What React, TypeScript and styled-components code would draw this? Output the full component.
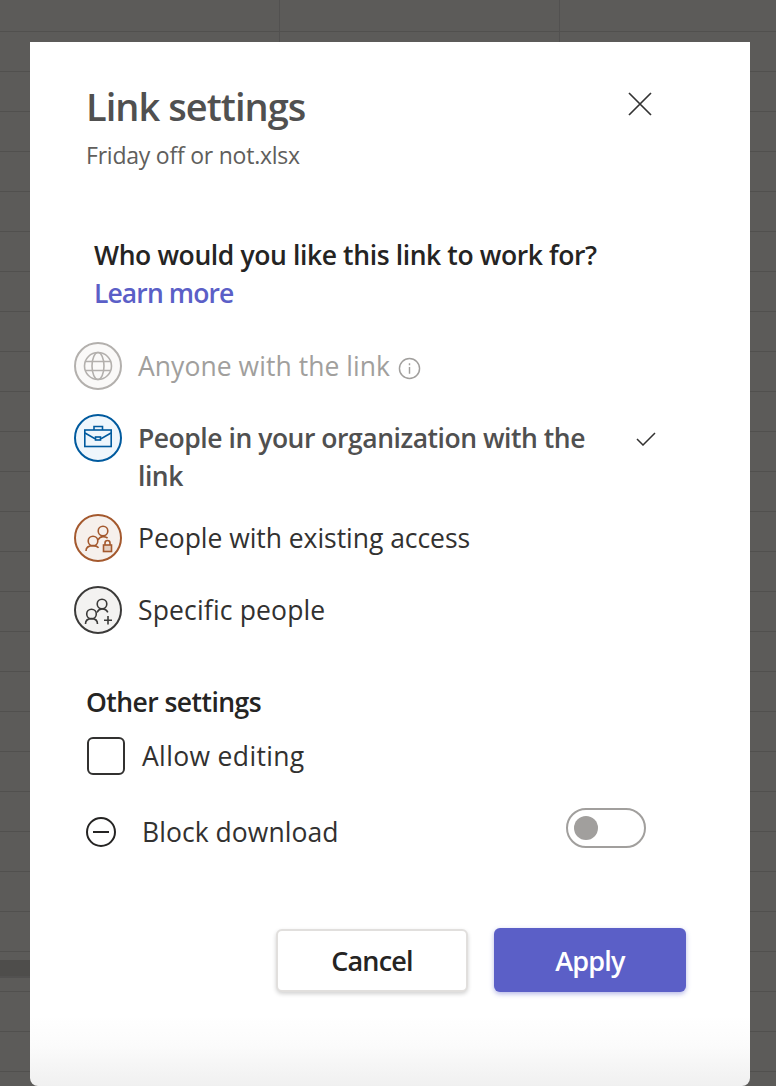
import React from "react";
import styled, { createGlobalStyle } from "styled-components";

const FONT = `"Open Sans", "Noto Sans", "Liberation Sans", sans-serif`;

const Global = createGlobalStyle`
  html, body { margin: 0; padding: 0; height: 100%; }
  body { overflow: hidden; background: #5c5b59; font-family: ${FONT}; }
  * { box-sizing: border-box; }
`;

const Page = styled.div`
  width: 776px;
  height: 1086px;
  padding: 42px 26px 0 30px;
  background-color: #5c5b59;
  background-image:
    linear-gradient(#4e4d4b, #4e4d4b),
    linear-gradient(#525150, #525150),
    repeating-linear-gradient(to bottom, transparent 0 31px, #51504e 31px 32px, transparent 32px 40px),
    linear-gradient(to right, transparent 279px, #525150 279px 280px, transparent 280px 559px, #525150 559px 560px, transparent 560px);
  background-size: 30px 16px, 30px 2px, 100% 100%, 100% 42px;
  background-position: 0 960px, 0 976px, 0 0, 0 0;
  background-repeat: no-repeat;
`;

const Dialog = styled.section`
  width: 720px;
  height: 1044px;
  padding: 39px 64px 0 56px;
  border-radius: 0 0 8px 8px;
  background: linear-gradient(to top, #f0f0f0 0, #fbfbfb 40px, #fff 70px);
  display: flex;
  flex-direction: column;
`;

const Header = styled.header`
  display: flex;
  justify-content: space-between;
  align-items: flex-start;
  padding-right: 34px;
`;

const Title = styled.h1`
  margin: 0;
  font-size: 38px;
  line-height: 50px;
  font-weight: 600;
  letter-spacing: -0.95px;
  color: #505050;
`;

const Close = styled.button`
  width: 24px;
  height: 24px;
  margin-top: 11px;
  padding: 0;
  border: 0;
  background: none;
  display: block;
  color: #333;
`;

const Subtitle = styled.p`
  margin: 9px 0 0;
  font-size: 23px;
  line-height: 30px;
  letter-spacing: -0.23px;
  color: #605e5c;
`;

const Question = styled.h2`
  margin: 66px 0 0 8px;
  font-size: 26.5px;
  line-height: 38px;
  font-weight: 600;
  letter-spacing: -0.39px;
  color: #252423;
`;

const Learn = styled.a`
  display: block;
  margin-left: 8px;
  font-size: 26.5px;
  line-height: 38px;
  font-weight: 600;
  letter-spacing: -0.9px;
  color: #5b5fc7;
`;

const Options = styled.div`
  display: flex;
  flex-direction: column;
  gap: 24px;
  margin: 30px 0 0 -12px;
`;

const Row = styled.div`
  display: flex;
  align-items: flex-start;
  gap: 16px;
`;

const IconCircle = styled.svg`
  flex: none;
  width: 48px;
  height: 48px;
  display: block;
`;

const OptionText = styled.div<{ $tone: "muted" | "strong" | "plain"; $tracking?: number }>`
  width: 474px;
  margin: 5px 0 -5px;
  font-size: 26.5px;
  line-height: 38px;
  letter-spacing: ${(p) => (p.$tone === "strong" ? -0.47 : p.$tracking ?? 0.05)}px;
  font-weight: ${(p) => (p.$tone === "strong" ? 600 : 400)};
  color: ${(p) => (p.$tone === "muted" ? "#a19f9d" : p.$tone === "strong" ? "#505050" : "#323130")};
`;

const InfoIcon = styled.svg`
  width: 23px;
  height: 23px;
  margin-left: 8px;
  vertical-align: -4px;
`;

const Check = styled.svg`
  flex: none;
  width: 20px;
  height: 14px;
  margin: 18px 0 0 8px;
`;

const Section = styled.h3`
  margin: 49px 0 0;
  font-size: 26.5px;
  line-height: 38px;
  font-weight: 600;
  letter-spacing: -0.55px;
  color: #252423;
`;

const CheckRow = styled.label`
  display: flex;
  align-items: center;
  margin-top: 15px;
  height: 40px;
`;

const Box = styled.span`
  width: 38px;
  height: 38px;
  border: 2px solid #323130;
  border-radius: 6px;
  margin-left: 1px;
`;

const AllowText = styled.span`
  margin-left: 17px;
  font-size: 26.5px;
  line-height: 38px;
  letter-spacing: 0.35px;
  color: #323130;
`;

const BlockRow = styled.div`
  display: flex;
  align-items: center;
  margin-top: 31px;
  height: 40px;
  padding-right: 40px;
`;

const BlockIcon = styled.svg`
  flex: none;
  width: 30px;
  height: 30px;
  margin: 10px 26px 0 0;
`;

const BlockText = styled.span`
  flex: 1;
  margin-top: 10px;
  font-size: 26.5px;
  line-height: 38px;
  letter-spacing: 0.05px;
  color: #323130;
`;

const Toggle = styled.div`
  width: 80px;
  height: 40px;
  border: 2px solid #a19f9d;
  border-radius: 20px;
  padding: 6px;
  margin-top: 2px;
`;

const Knob = styled.div`
  width: 24px;
  height: 24px;
  border-radius: 50%;
  background: #a19f9d;
`;

const Actions = styled.div`
  display: flex;
  justify-content: flex-end;
  align-items: center;
  gap: 26px;
  margin-top: 81px;
`;

const CancelButton = styled.button`
  width: 192px;
  height: 63px;
  border: 2px solid #e1dfdd;
  border-radius: 6px;
  background: #fff;
  box-shadow: 0 2px 4px rgba(0, 0, 0, 0.18);
  font-family: ${FONT};
  font-size: 27px;
  font-weight: 600;
  letter-spacing: -0.8px;
  color: #252423;
`;

const ApplyButton = styled.button`
  width: 192px;
  height: 64px;
  border: 0;
  border-radius: 6px;
  background: #5b5fc7;
  box-shadow: 0 2px 5px rgba(91, 95, 199, 0.45);
  font-family: ${FONT};
  font-size: 27px;
  font-weight: 600;
  letter-spacing: -0.8px;
  color: #fff;
`;

const Globe = () => (
  <IconCircle viewBox="0 0 48 48" fill="none">
    <circle cx="24" cy="24" r="23" fill="#faf9f8" stroke="#b3b0ad" strokeWidth="2" />
    <g stroke="#b3b0ad" strokeWidth="1.6">
      <circle cx="24" cy="24" r="13.5" />
      <ellipse cx="24" cy="24" rx="6" ry="13.5" />
      <path d="M11 19.5h26M11 28.5h26" />
    </g>
  </IconCircle>
);

const Briefcase = () => (
  <IconCircle viewBox="0 0 48 48" fill="none">
    <circle cx="24" cy="24" r="23" fill="#eff6fc" stroke="#005a9e" strokeWidth="2" />
    <g stroke="#005a9e" strokeWidth="1.6">
      <rect x="10.8" y="16" width="26.4" height="16.5" />
      <path d="M20 16v-3.5h8.5V16M11 19l9.5 5.5h7L37 19" />
      <rect x="21.5" y="23" width="5" height="3" fill="#eff6fc" />
    </g>
  </IconCircle>
);

const PeopleLock = () => (
  <IconCircle viewBox="0 0 48 48" fill="none">
    <circle cx="24" cy="24" r="23" fill="#f6f0ec" stroke="#a4592e" strokeWidth="2" />
    <g stroke="#a4592e" strokeWidth="1.6">
      <circle cx="29" cy="17" r="4.8" />
      <circle cx="19" cy="27" r="4.8" />
      <path d="M12 37c0-3.6 3-5.4 7-5.4 2.4 0 4.4.8 5.6 2.2M24 26c1-2 3-3.4 5-3.4 1.8 0 3.2.4 4.6 1.4" />
      <rect x="29.5" y="31" width="8" height="6.5" fill="#a4592e" fillOpacity="0.22" />
      <path d="M31 31v-2a2.5 2.5 0 0 1 5 0v2" />
    </g>
  </IconCircle>
);

const PeopleAdd = () => (
  <IconCircle viewBox="0 0 48 48" fill="none">
    <circle cx="24" cy="24" r="23" fill="#f3f2f1" stroke="#3b3a39" strokeWidth="2" />
    <g stroke="#3b3a39" strokeWidth="1.6">
      <circle cx="28" cy="18" r="4.8" />
      <circle cx="17.5" cy="28" r="4.8" />
      <path d="M11.5 38c0-3.6 2.6-5.4 6-5.4 3.4 0 6 1.8 6 5.4M23 26.5c1-2 3-3.6 5-3.6 2.6 0 4.8 1.2 5.8 3.4M34 30v8.5M30 34.2h8" />
    </g>
  </IconCircle>
);

export default function App() {
  return (
    <Page>
      <Global />
      <Dialog>
        <Header>
          <Title>Link settings</Title>
          <Close aria-label="Close">
            <svg width="24" height="24" viewBox="0 0 24 24" fill="none" stroke="currentColor" strokeWidth="1.7">
              <path d="M1 1l22 22M23 1L1 23" />
            </svg>
          </Close>
        </Header>
        <Subtitle>Friday off or not.xlsx</Subtitle>
        <Question>Who would you like this link to work for?</Question>
        <Learn>Learn more</Learn>
        <Options>
          <Row>
            <Globe />
            <OptionText $tone="muted">
              Anyone with the link
              <InfoIcon viewBox="0 0 24 24" fill="none" stroke="#a19f9d" strokeWidth="1.5">
                <circle cx="12" cy="12" r="10.5" />
                <path d="M12 10.5v7M12 6.5v2" />
              </InfoIcon>
            </OptionText>
          </Row>
          <Row>
            <Briefcase />
            <OptionText $tone="strong">People in your organization with the link</OptionText>
            <Check viewBox="0 0 20 14" fill="none" stroke="#323130" strokeWidth="1.5">
              <path d="M1 7l6 6L19 1" />
            </Check>
          </Row>
          <Row>
            <PeopleLock />
            <OptionText $tone="plain" $tracking={-0.04}>People with existing access</OptionText>
          </Row>
          <Row>
            <PeopleAdd />
            <OptionText $tone="plain" $tracking={0.16}>Specific people</OptionText>
          </Row>
        </Options>
        <Section>Other settings</Section>
        <CheckRow>
          <Box />
          <AllowText>Allow editing</AllowText>
        </CheckRow>
        <BlockRow>
          <BlockIcon viewBox="0 0 30 30" fill="none" stroke="#252423" strokeWidth="2">
            <circle cx="15" cy="15" r="14" />
            <path d="M7 15h16" />
          </BlockIcon>
          <BlockText>Block download</BlockText>
          <Toggle>
            <Knob />
          </Toggle>
        </BlockRow>
        <Actions>
          <CancelButton>Cancel</CancelButton>
          <ApplyButton>Apply</ApplyButton>
        </Actions>
      </Dialog>
    </Page>
  );
}
